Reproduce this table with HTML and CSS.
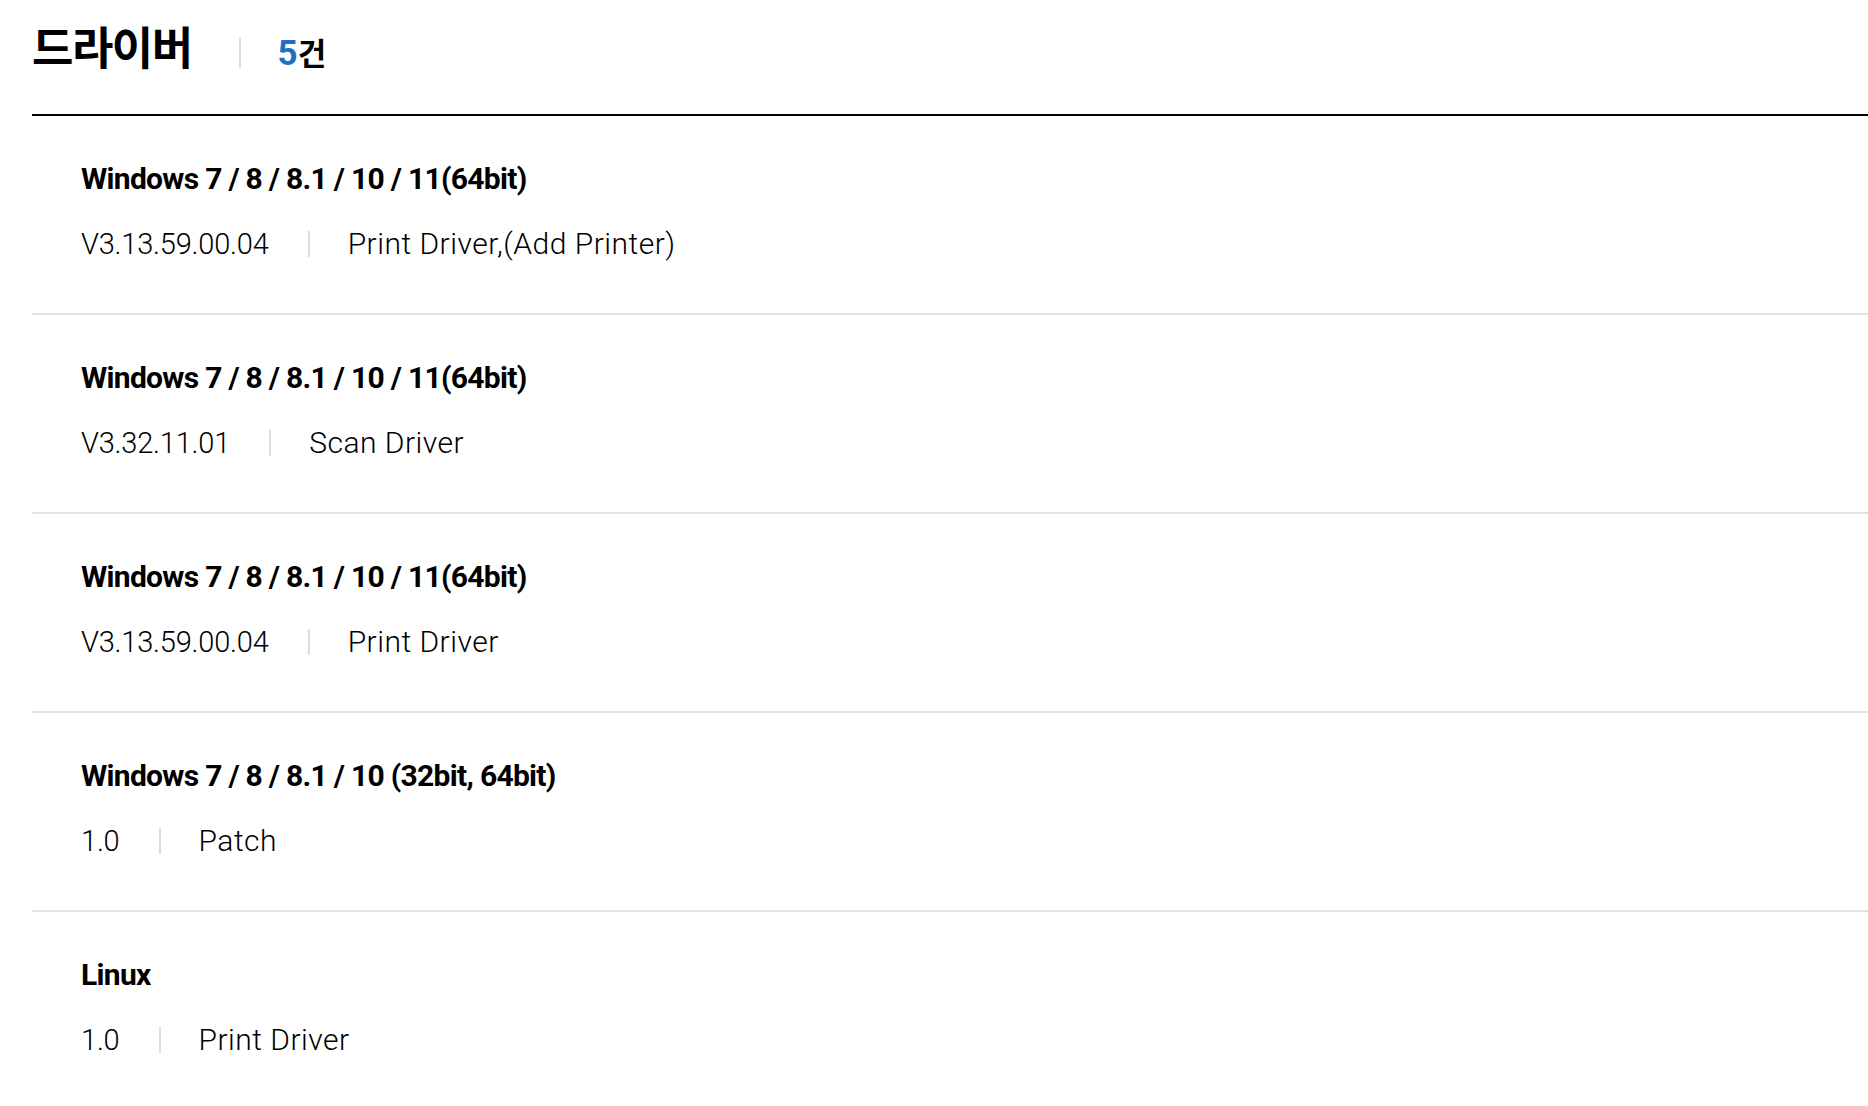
FILE: index.html
```html
<!DOCTYPE html>
<html lang="ko">
<head>
<meta charset="utf-8">
<title>드라이버</title>
<link rel="stylesheet" href="styles.css">
</head>
<body>
<div class="page">
  <div class="header">
    <h2 class="title">드라이버</h2>
    <span class="divider"></span>
    <span class="count"><span class="num">5</span>건</span>
  </div>
  <ul class="list">
    <li class="item">
      <div class="os">Windows 7 / 8 / 8.1 / 10 / 11(64bit)</div>
      <div class="meta"><span class="ver">V3.13.59.00.04</span><span class="sep"></span><span class="kind">Print Driver,(Add Printer)</span></div>
    </li>
    <li class="item">
      <div class="os">Windows 7 / 8 / 8.1 / 10 / 11(64bit)</div>
      <div class="meta"><span class="ver">V3.32.11.01</span><span class="sep"></span><span class="kind">Scan Driver</span></div>
    </li>
    <li class="item">
      <div class="os">Windows 7 / 8 / 8.1 / 10 / 11(64bit)</div>
      <div class="meta"><span class="ver">V3.13.59.00.04</span><span class="sep"></span><span class="kind">Print Driver</span></div>
    </li>
    <li class="item">
      <div class="os">Windows 7 / 8 / 8.1 / 10 (32bit, 64bit)</div>
      <div class="meta"><span class="ver">1.0</span><span class="sep"></span><span class="kind">Patch</span></div>
    </li>
    <li class="item">
      <div class="os">Linux</div>
      <div class="meta"><span class="ver">1.0</span><span class="sep"></span><span class="kind">Print Driver</span></div>
    </li>
  </ul>
</div>
</body>
</html>
```
FILE: styles.css
```css
html, body {
  margin: 0;
  padding: 0;
  background: #fff;
}
body {
  font-family: Roboto, "Noto Sans CJK KR", sans-serif;
  color: #000;
}
.page {
  padding-left: 32px;
}
.header {
  display: flex;
  align-items: baseline;
  box-sizing: border-box;
  height: 114px;
  padding-top: 23px;
  padding-bottom: 46px;
}
.title {
  margin: 0;
  font-family: "Noto Sans CJK KR", sans-serif;
  font-size: 45px;
  font-weight: 700;
  line-height: 1;
  letter-spacing: -1.5px;
}
.divider {
  align-self: flex-end;
  width: 2px;
  height: 31px;
  background: #dddddd;
  margin: 0 37px 0 47px;
}
.count {
  font-family: "Noto Sans CJK KR", sans-serif;
  font-size: 31px;
  font-weight: 700;
  line-height: 1;
}
.num {
  font-family: Roboto, sans-serif;
  font-size: 35px;
  color: #1f6fc5;
}
.list {
  list-style: none;
  margin: 0;
  padding: 0;
  border-top: 2px solid #000;
}
.item {
  height: 197px;
  border-bottom: 2px solid #e2e2e2;
  padding-left: 49px;
}
.os {
  padding-top: 45px;
  font-size: 30px;
  font-weight: 700;
  line-height: 36px;
  letter-spacing: -0.7px;
}
.meta {
  display: flex;
  align-items: center;
  margin-top: 29px;
  font-size: 29px;
  font-weight: 300;
  line-height: 36px;
}
.ver {
  letter-spacing: -0.2px;
}
.kind {
  font-size: 30px;
  letter-spacing: 0.5px;
}
.sep {
  width: 2px;
  height: 26px;
  background: #dddddd;
  margin: 0 38px 0 39px;
}
```
